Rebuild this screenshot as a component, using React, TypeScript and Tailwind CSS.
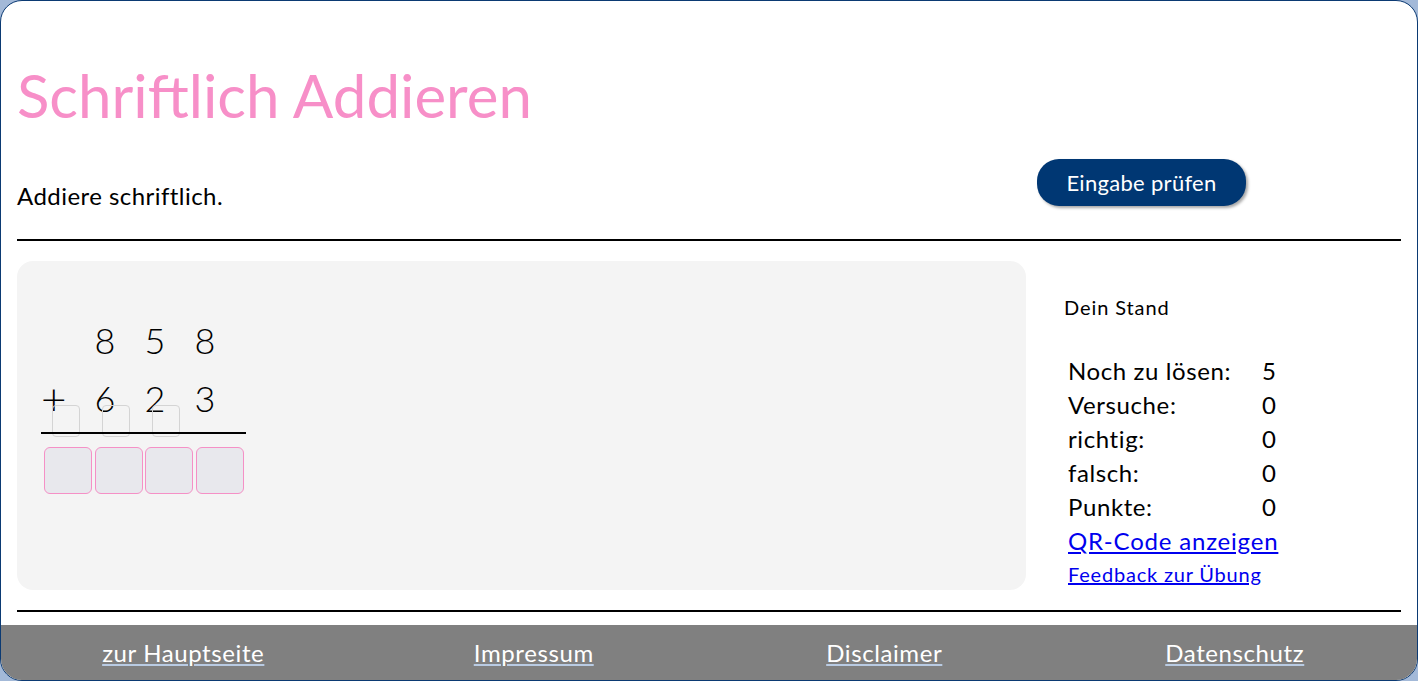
import React from "react";

const stats = [
  { label: "Noch zu lösen:", value: "5" },
  { label: "Versuche:", value: "0" },
  { label: "richtig:", value: "0" },
  { label: "falsch:", value: "0" },
  { label: "Punkte:", value: "0" },
];

const footerLinks = ["zur Hauptseite", "Impressum", "Disclaimer", "Datenschutz"];

function Aufgabe() {
  return (
    <div className="flex flex-col pl-[24px] pt-[50px] text-[36px] font-light text-black">
      <div className="flex h-[58px] items-center leading-none">
        <div className="w-[39px]" />
        <div className="w-[50px] text-center">8</div>
        <div className="w-[50px] text-center">5</div>
        <div className="w-[50px] text-center">8</div>
      </div>
      <div className="flex h-[58px] items-center leading-none">
        <div className="w-[39px] text-left text-[44px] font-light">+</div>
        <div className="w-[50px] text-center">6</div>
        <div className="w-[50px] text-center">2</div>
        <div className="w-[50px] text-center">3</div>
      </div>
      {/* Übertrag */}
      <div className="ml-[11px] mt-[-22px] flex">
        {[0, 1, 2].map((i) => (
          <div key={i} className="w-[50px]">
            <div className="h-[32px] w-[28px] rounded-[4px] border border-[#d4d4d4]" />
          </div>
        ))}
      </div>
      <div className="mt-[-5px] h-[2px] w-[205px] bg-black" />
      <div className="ml-[3px] mt-[13px] flex gap-[2.5px]">
        {[0, 1, 2, 3].map((i) => (
          <div
            key={i}
            className="h-[47px] w-[48px] rounded-[6px] border border-[#f590c6] bg-[#e8e8ed]"
          />
        ))}
      </div>
    </div>
  );
}

export default function App() {
  return (
    <div className="min-h-screen bg-[#a3b9d8]" style={{ fontFamily: "Lato, 'Open Sans', sans-serif" }}>
      <div className="flex h-[681px] flex-col overflow-hidden rounded-[22px] border border-[#0b3a73] bg-white">
        <div className="flex flex-1 flex-col px-[16px] pt-[58px]">
          <h1 className="h-[72px] text-[60px] font-normal leading-[72px] text-[#f78fc8]">
            Schriftlich Addieren
          </h1>

          <div className="mt-[28px] flex items-start">
            <p className="w-[1020px] pt-[22px] text-[24px] leading-[29px] tracking-[0.45px] text-black">
              Addiere schriftlich.
            </p>
            <button className="h-[47px] w-[209px] rounded-[22px] bg-[#003773] text-[22px] tracking-[0.3px] text-white shadow-[2px_2px_3px_rgba(0,0,0,0.35)]">
              Eingabe prüfen
            </button>
          </div>

          <div className="mt-[29px] h-[2px] bg-black" />

          <div className="mt-[20px] flex">
            <div className="h-[329px] w-[1009px] rounded-[16px] bg-[#f4f4f4]">
              <Aufgabe />
            </div>
            <div className="flex flex-col pl-[38px] pt-[34px] tracking-[0.6px] text-black">
              <div className="text-[20px] leading-[24px] tracking-[0.9px]">Dein Stand</div>
              <div className="mt-[35px] flex flex-col pl-[4px]">
                {stats.map((s) => (
                  <div key={s.label} className="flex h-[34px] items-center text-[24px]">
                    <span className="w-[194px]">{s.label}</span>
                    <span>{s.value}</span>
                  </div>
                ))}
                <a href="#" className="h-[34px] text-[24px] leading-[34px] tracking-[0.8px] text-[#0000ee] underline">
                  QR-Code anzeigen
                </a>
                <a href="#" className="mt-[2px] text-[20px] leading-[28px] tracking-[0.8px] text-[#0000ee] underline">
                  Feedback zur Übung
                </a>
              </div>
            </div>
          </div>

          <div className="mt-[20px] h-[2px] bg-black" />
        </div>

        <footer className="mt-[13px] grid h-[56px] grid-cols-4 items-center bg-[#808080] px-[7px]">
          {footerLinks.map((l) => (
            <a
              key={l}
              href="#"
              className="text-center text-[24px] tracking-[0.6px] text-white underline decoration-[#b9cbe3]"
            >
              {l}
            </a>
          ))}
        </footer>
      </div>
    </div>
  );
}
